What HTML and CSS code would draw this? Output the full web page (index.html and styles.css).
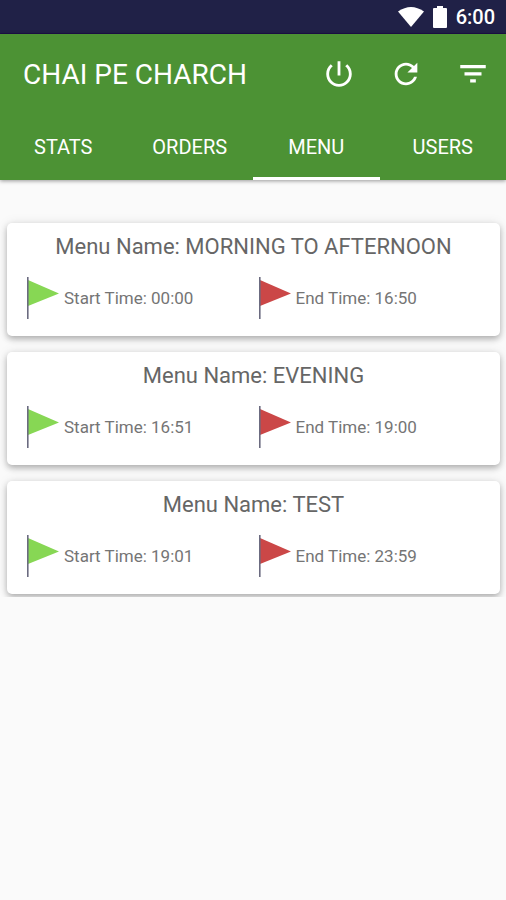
FILE: index.html
```html
<!DOCTYPE html>
<html lang="en">
<head>
<meta charset="utf-8">
<meta name="viewport" content="width=device-width, initial-scale=1">
<title>Chai Pe Charch</title>
<link rel="stylesheet" href="styles.css">
</head>
<body>
<svg class="defs" aria-hidden="true">
  <symbol id="flag" viewBox="0 0 32 42">
    <path fill="currentColor" d="M1 3L32 16.500 1 29z"/>
    <path fill="#6b6b80" d="M0 0h1.600v42H0z"/>
  </symbol>
</svg>
<div class="status-bar">
  <svg class="wifi" viewBox="0 0 26 20" aria-hidden="true"><path d="M0 4.500Q13-4.500 26 4.500L13 20z"/></svg>
  <svg class="battery" viewBox="0 0 14 22" aria-hidden="true"><path d="M4 0h6v2h3q1 0 1 1v18q0 1-1 1H1q-1 0-1-1V3q0-1 1-1h3z"/></svg>
  <span class="clock">6:00</span>
</div>
<header class="header">
  <div class="app-bar">
    <h1 class="app-title">CHAI PE CHARCH</h1>
    <button class="action" type="button" aria-label="Log out">
      <svg viewBox="0 0 24 24"><path d="M13 3h-2v10h2V3zm4.830 2.170l-1.420 1.420C17.990 7.860 19 9.810 19 12c0 3.870-3.130 7-7 7s-7-3.130-7-7c0-2.190 1.010-4.140 2.580-5.420L6.170 5.170C4.230 6.820 3 9.260 3 12c0 4.970 4.030 9 9 9s9-4.030 9-9c0-2.740-1.230-5.180-3.170-6.830z"/></svg>
    </button>
    <button class="action" type="button" aria-label="Refresh">
      <svg viewBox="0 0 24 24"><path d="M17.650 6.350C16.200 4.900 14.210 4 12 4c-4.420 0-7.990 3.580-7.990 8s3.570 8 7.990 8c3.730 0 6.840-2.550 7.730-6h-2.080c-.82 2.330-3.040 4-5.650 4-3.310 0-6-2.690-6-6s2.690-6 6-6c1.660 0 3.140.69 4.220 1.780L13 11h7V4l-2.350 2.350z"/></svg>
    </button>
    <button class="action" type="button" aria-label="Filter">
      <svg viewBox="0 0 24 24"><path d="M10 18h4v-2.300h-4v2.300zM3 5.700v2.300h18V5.700H3zm3 7.300h12v-2.300H6v2.300z"/></svg>
    </button>
  </div>
  <nav class="tabs">
    <a class="tab" href="#stats">STATS</a>
    <a class="tab" href="#orders">ORDERS</a>
    <a class="tab active" href="#menu" aria-current="page">MENU</a>
    <a class="tab" href="#users">USERS</a>
  </nav>
</header>
<main class="menu-list">
  <article class="card">
    <h2 class="card-title">Menu Name: MORNING TO AFTERNOON</h2>
    <div class="times">
      <p class="time start"><svg class="flag"><use href="#flag"/></svg><span>Start Time: 00:00</span></p>
      <p class="time end"><svg class="flag"><use href="#flag"/></svg><span>End Time: 16:50</span></p>
    </div>
  </article>
  <article class="card">
    <h2 class="card-title">Menu Name: EVENING</h2>
    <div class="times">
      <p class="time start"><svg class="flag"><use href="#flag"/></svg><span>Start Time: 16:51</span></p>
      <p class="time end"><svg class="flag"><use href="#flag"/></svg><span>End Time: 19:00</span></p>
    </div>
  </article>
  <article class="card">
    <h2 class="card-title">Menu Name: TEST</h2>
    <div class="times">
      <p class="time start"><svg class="flag"><use href="#flag"/></svg><span>Start Time: 19:01</span></p>
      <p class="time end"><svg class="flag"><use href="#flag"/></svg><span>End Time: 23:59</span></p>
    </div>
  </article>
</main>
</body>
</html>
```
FILE: styles.css
```css
* {
  box-sizing: border-box;
}

body {
  margin: 0;
  background: #fafafa;
  color: #666;
  font-family: Roboto, "Liberation Sans", sans-serif;
}

h1,
h2,
p {
  margin: 0;
  font-weight: 400;
}

.defs {
  display: none;
}

.status-bar {
  display: flex;
  align-items: center;
  justify-content: flex-end;
  height: 34px;
  padding-right: 11px;
  border-bottom: 1px solid #1c1048;
  background: #202147;
  color: #fff;
  fill: #fff;
}

.wifi {
  width: 26px;
  height: 20px;
  margin-right: 9px;
}

.battery {
  width: 14px;
  height: 22px;
  margin-right: 9px;
}

.clock {
  font-size: 20px;
  font-weight: 500;
  line-height: 34px;
}

.header {
  position: relative;
  background: #4c9234;
  color: #fff;
  box-shadow: 0 1px 4px rgba(0, 0, 0, 0.4);
}

.app-bar {
  display: flex;
  align-items: center;
  height: 80px;
  padding-left: 23px;
}

.app-title {
  flex: 1;
  padding-top: 2px;
  font-size: 28px;
  line-height: 32px;
}

.action {
  display: flex;
  align-items: center;
  justify-content: center;
  width: 67px;
  height: 67px;
  padding: 0;
  border: 0;
  background: none;
}

.action svg {
  width: 34px;
  height: 34px;
  fill: #fff;
}

.tabs {
  display: grid;
  grid-template-columns: repeat(4, 1fr);
}

.tab {
  height: 66px;
  border-bottom: 3px solid transparent;
  color: #fff;
  font-size: 20px;
  line-height: 67px;
  text-align: center;
  text-decoration: none;
}

.tab.active {
  border-color: #fff;
}

.menu-list {
  display: flex;
  flex-direction: column;
  gap: 16px;
  padding: 43px 6px 3px 7px;
  overflow: hidden;
}

.card {
  padding: 8px 20px 17px;
  border-radius: 5px;
  background: #fff;
  box-shadow: 0 3px 6px rgba(0, 0, 0, 0.28), 0 0 12px rgba(0, 0, 0, 0.08);
}

.card-title {
  font-size: 22px;
  line-height: 32px;
  text-align: center;
}

.times {
  display: grid;
  grid-template-columns: 1fr 1fr;
  margin-right: -10px;
  padding-top: 14px;
}

.time {
  display: flex;
  align-items: center;
  gap: 5px;
  color: #757575;
  font-size: 17px;
  line-height: 20px;
}

.flag {
  width: 32px;
  height: 42px;
}

.start .flag {
  color: #87d754;
}

.end .flag {
  color: #cb4747;
}
```
